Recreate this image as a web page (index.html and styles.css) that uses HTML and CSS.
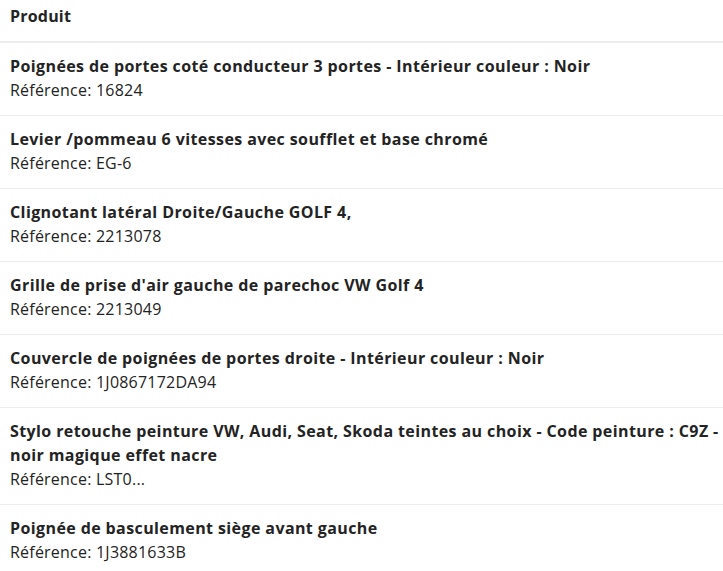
FILE: index.html
```html
<!DOCTYPE html>
<html lang="fr">
<head>
<meta charset="utf-8">
<link rel="stylesheet" href="styles.css">
</head>
<body>
<table class="products">
  <thead>
    <tr><th>Produit</th></tr>
  </thead>
  <tbody>
    <tr><td><div class="name">Poignées de portes coté conducteur 3 portes - Intérieur couleur : Noir</div><div class="ref">Référence: 16824</div></td></tr>
    <tr><td><div class="name">Levier /pommeau 6 vitesses avec soufflet et base chromé</div><div class="ref">Référence: EG-6</div></td></tr>
    <tr><td><div class="name">Clignotant latéral Droite/Gauche GOLF 4,</div><div class="ref">Référence: 2213078</div></td></tr>
    <tr><td><div class="name">Grille de prise d'air gauche de parechoc VW Golf 4</div><div class="ref">Référence: 2213049</div></td></tr>
    <tr><td><div class="name">Couvercle de poignées de portes droite - Intérieur couleur : Noir</div><div class="ref">Référence: 1J0867172DA94</div></td></tr>
    <tr><td><div class="name">Stylo retouche peinture VW, Audi, Seat, Skoda teintes au choix - Code peinture : C9Z - noir magique effet nacre</div><div class="ref">Référence: LST0...</div></td></tr>
    <tr><td><div class="name">Poignée de basculement siège avant gauche</div><div class="ref">Référence: 1J3881633B</div></td></tr>
  </tbody>
</table>
</body>
</html>
```
FILE: styles.css
```css
html, body {
  margin: 0;
  padding: 0;
  background: #fff;
}
body {
  font-family: "Open Sans", "Liberation Sans", sans-serif;
  color: #232323;
  font-size: 16px;
  line-height: 24px;
}
.products {
  width: 723px;
  border-collapse: collapse;
}
.products th {
  text-align: left;
  font-weight: 700;
  letter-spacing: 0.2px;
  padding: 4px 0 13px 10px;
  border-bottom: 2px solid #ececec;
}
.products td {
  padding: 11px 0 13px 10px;
  border-bottom: 1px solid #ececec;
}
.name {
  font-weight: 700;
  letter-spacing: 0.4px;
}
.ref {
  font-weight: 400;
  font-size: 16px;
  letter-spacing: 0.22px;
}
```
